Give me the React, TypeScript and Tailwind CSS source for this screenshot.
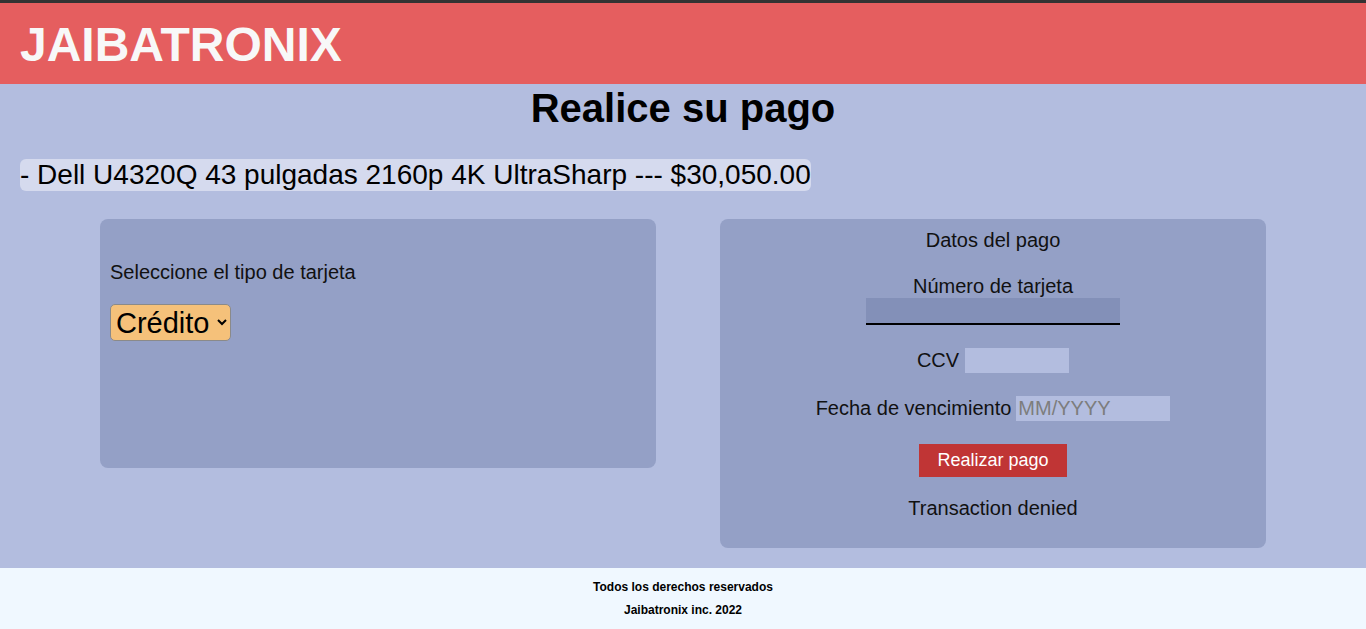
import { useState } from "react";

const font = "font-['Liberation_Sans',Arial,sans-serif]";

export default function App() {
  const [tipo, setTipo] = useState("credito");

  return (
    <div className={`min-h-screen flex flex-col bg-[#b3bddf] ${font}`}>
      {/* Header */}
      <header className="border-t-[3px] border-[#333333] bg-[#e55e5f] h-[84px] flex items-center px-5">
        <h1 className="text-[48px] font-bold leading-none text-[#f8f8f8] pt-[2px]">
          JAIBATRONIX
        </h1>
      </header>

      {/* Main */}
      <main className="flex-1 flex flex-col">
        <h2 className="text-center text-[40px] font-bold leading-[46px] mt-[1px] text-black">
          Realice su pago
        </h2>

        <div className="px-5 mt-[28px]">
          <span className="inline-block bg-[#d5daee] rounded-[6px] text-[28px] leading-[32px] text-black">
            - Dell U4320Q 43 pulgadas 2160p 4K UltraSharp --- $30,050.00
          </span>
        </div>

        <div className="flex items-start justify-between px-[100px] mt-[28px] pb-5">
          {/* Card type */}
          <section className="w-[556px] h-[249px] bg-[#94a0c6] rounded-[8px] px-[10px]">
            <p className="text-[20px] leading-[23px] mt-[42px] text-[#111]">
              Seleccione el tipo de tarjeta
            </p>
            <select
              value={tipo}
              onChange={(e) => setTipo(e.target.value)}
              className="mt-[20px] h-[37px] w-[121px] bg-[#f5c17a] text-[29px] leading-none text-black border border-[#8a8a8a] rounded-[5px] pl-[1px]"
            >
              <option value="credito">Crédito</option>
              <option value="debito">Débito</option>
            </select>
          </section>

          {/* Payment data */}
          <section className="w-[546px] h-[329px] bg-[#94a0c6] rounded-[8px] flex flex-col items-center pt-[10px] text-[20px] leading-[23px] text-[#111]">
            <p>Datos del pago</p>
            <p className="mt-[23px]">Número de tarjeta</p>
            <input
              type="text"
              className="w-[254px] h-[27px] bg-[#8390b8] border-0 border-b-2 border-black outline-none px-1"
            />
            <div className="mt-[23px] flex items-center gap-[6px]">
              <span>CCV</span>
              <input
                type="text"
                className="w-[104px] h-[25px] bg-[#b3bddf] border-0 outline-none px-1"
              />
            </div>
            <div className="mt-[23px] flex items-center gap-[5px]">
              <span>Fecha de vencimiento</span>
              <input
                type="text"
                placeholder="MM/YYYY"
                className="w-[154px] h-[25px] bg-[#b3bddf] border-0 outline-none px-[2px] text-[20px] placeholder:text-[#7d7d7d]"
              />
            </div>
            <button className="mt-[23px] w-[148px] h-[33px] bg-[#c03535] text-white text-[18px]">
              Realizar pago
            </button>
            <p className="mt-[20px]">Transaction denied</p>
          </section>
        </div>
      </main>

      {/* Footer */}
      <footer className="h-[61px] bg-[#f0f8ff] flex flex-col items-center justify-center gap-[9px] text-[12px] font-bold leading-[14px] text-black">
        <p>Todos los derechos reservados</p>
        <p>Jaibatronix inc. 2022</p>
      </footer>
    </div>
  );
}
